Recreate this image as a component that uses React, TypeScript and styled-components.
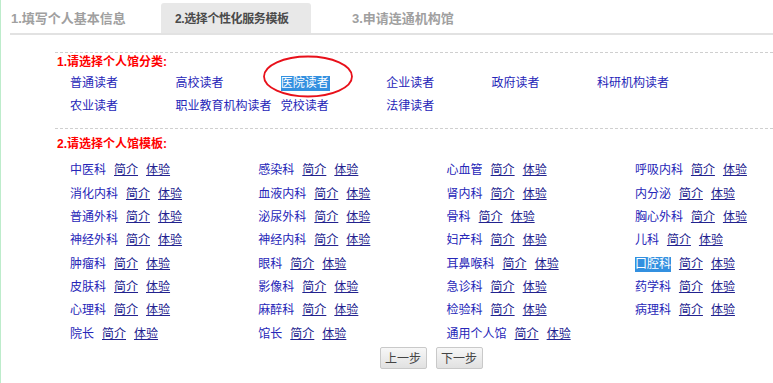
import React from "react";
import styled, { createGlobalStyle } from "styled-components";

const Global = createGlobalStyle`
  html, body { margin: 0; padding: 0; background: #fff; }
  body { font-family: "Liberation Sans", "Noto Sans CJK SC", sans-serif; font-size: 12px; }
`;

const Page = styled.div`
  position: relative;
  height: 383px;
  box-sizing: border-box;
  border-left: 1px solid #bdeccb;
  overflow: hidden;
`;

const TabBar = styled.div`
  display: flex;
  align-items: flex-end;
  margin-left: 9px;
  padding-top: 3px;
  height: 30px;
  border-bottom: 2px solid #e2e2e2;
`;

const Tab = styled.div<{ $active?: boolean; $w: number; $pl: number; $fs: number }>`
  box-sizing: border-box;
  width: ${(p) => p.$w}px;
  height: 30px;
  padding-left: ${(p) => p.$pl}px;
  display: flex;
  align-items: center;
  font-weight: bold;
  font-size: ${(p) => p.$fs}px;
  letter-spacing: ${(p) => (p.$active ? "-0.4px" : "0")};
  color: ${(p) => (p.$active ? "#4a4a4a" : "#a0a0a0")};
  background: ${(p) => (p.$active ? "#e8e8e8" : "transparent")};
  border-radius: 3px 3px 0 0;
  padding-bottom: 2px;
`;

const Section = styled.div<{ $mt: number }>`
  margin-left: 54px;
  margin-top: ${(p) => p.$mt}px;
  border-top: 1px dashed #cfcfcf;
`;

const Title = styled.div<{ $mt: number }>`
  margin-top: ${(p) => p.$mt}px;
  padding-left: 2px;
  line-height: 18px;
  font-size: 12px;
  font-weight: bold;
  color: #ff0000;
`;

const CatGrid = styled.div`
  display: grid;
  grid-template-columns: repeat(6, 105.4px);
  grid-auto-rows: 23px;
  margin-top: 1px;
  padding-left: 15px;
`;

const Cat = styled.div`
  display: flex;
  align-items: center;
  color: #2626b8;
  font-size: 12px;
  line-height: 15px;
  white-space: nowrap;
`;

const Sel = styled.span`
  background: #3390e0;
  color: #fff;
  line-height: 15px;
  padding: 0 1px 0 0;
`;

const TplGrid = styled.div`
  display: grid;
  grid-template-columns: repeat(4, 188.3px);
  grid-auto-rows: 23.36px;
  margin-top: 6px;
  padding-left: 15px;
`;

const Tpl = styled.div`
  display: flex;
  align-items: center;
  white-space: nowrap;
  font-size: 12px;
  line-height: 15px;
`;

const Name = styled.span<{ $sel?: boolean }>`
  color: ${(p) => (p.$sel ? "#fff" : "#2626b8")};
  background: ${(p) => (p.$sel ? "#3390e0" : "transparent")};
  line-height: 15px;
`;

const Link = styled.a`
  margin-left: 8px;
  line-height: 15px;
  color: #22228e;
  text-decoration: underline;
  cursor: pointer;
`;

const Buttons = styled.div`
  display: flex;
  justify-content: center;
  gap: 9px;
  margin-left: 88px;
  margin-top: 1px;
`;

const Btn = styled.button`
  box-sizing: border-box;
  width: 47px;
  height: 22px;
  padding: 0;
  font-family: "Noto Sans CJK SC", sans-serif;
  font-size: 12px;
  color: #444;
  background: linear-gradient(#f7f7f7, #e1e1e1);
  border: 1px solid #c9c9c9;
  border-radius: 2px;
`;

const Circle = styled.svg`
  position: absolute;
  left: 261px;
  top: 55px;
  width: 92px;
  height: 43px;
  overflow: visible;
`;

const cats: [string, boolean][] = [
  ["普通读者", false],
  ["高校读者", false],
  ["医院读者", true],
  ["企业读者", false],
  ["政府读者", false],
  ["科研机构读者", false],
  ["农业读者", false],
  ["职业教育机构读者", false],
  ["党校读者", false],
  ["法律读者", false],
];

const tpls: (string | null)[] = [
  "中医科", "感染科", "心血管", "呼吸内科",
  "消化内科", "血液内科", "肾内科", "内分泌",
  "普通外科", "泌尿外科", "骨科", "胸心外科",
  "神经外科", "神经内科", "妇产科", "儿科",
  "肿瘤科", "眼科", "耳鼻喉科", "口腔科",
  "皮肤科", "影像科", "急诊科", "药学科",
  "心理科", "麻醉科", "检验科", "病理科",
  "院长", "馆长", "通用个人馆", null,
];

export default function App() {
  return (
    <Page>
      <Global />
      <TabBar>
        <Tab $w={151} $pl={1} $fs={13}>1.填写个人基本信息</Tab>
        <Tab $active $w={150} $pl={14} $fs={12}>2.选择个性化服务模板</Tab>
        <Tab $w={150} $pl={41} $fs={13}>3.申请连通机构馆</Tab>
      </TabBar>
      <Section $mt={17}>
        <Title $mt={0}>1.请选择个人馆分类:</Title>
        <CatGrid>
          {cats.map(([c, s]) => (
            <Cat key={c}>{s ? <Sel>{c}</Sel> : c}</Cat>
          ))}
        </CatGrid>
      </Section>
      <Section $mt={10}>
        <Title $mt={6}>2.请选择个人馆模板:</Title>
        <TplGrid>
          {tpls.map((t, i) =>
            t ? (
              <Tpl key={i}>
                <Name $sel={t === "口腔科"}>{t}</Name>
                <Link>简介</Link>
                <Link>体验</Link>
              </Tpl>
            ) : (
              <Tpl key={i} />
            )
          )}
        </TplGrid>
      </Section>
      <Buttons>
        <Btn>上一步</Btn>
        <Btn>下一步</Btn>
      </Buttons>
      <Circle viewBox="0 0 92 43">
        <ellipse cx="46" cy="21.5" rx="44" ry="20" fill="none" stroke="#e8101a" strokeWidth="1.8" />
      </Circle>
    </Page>
  );
}
